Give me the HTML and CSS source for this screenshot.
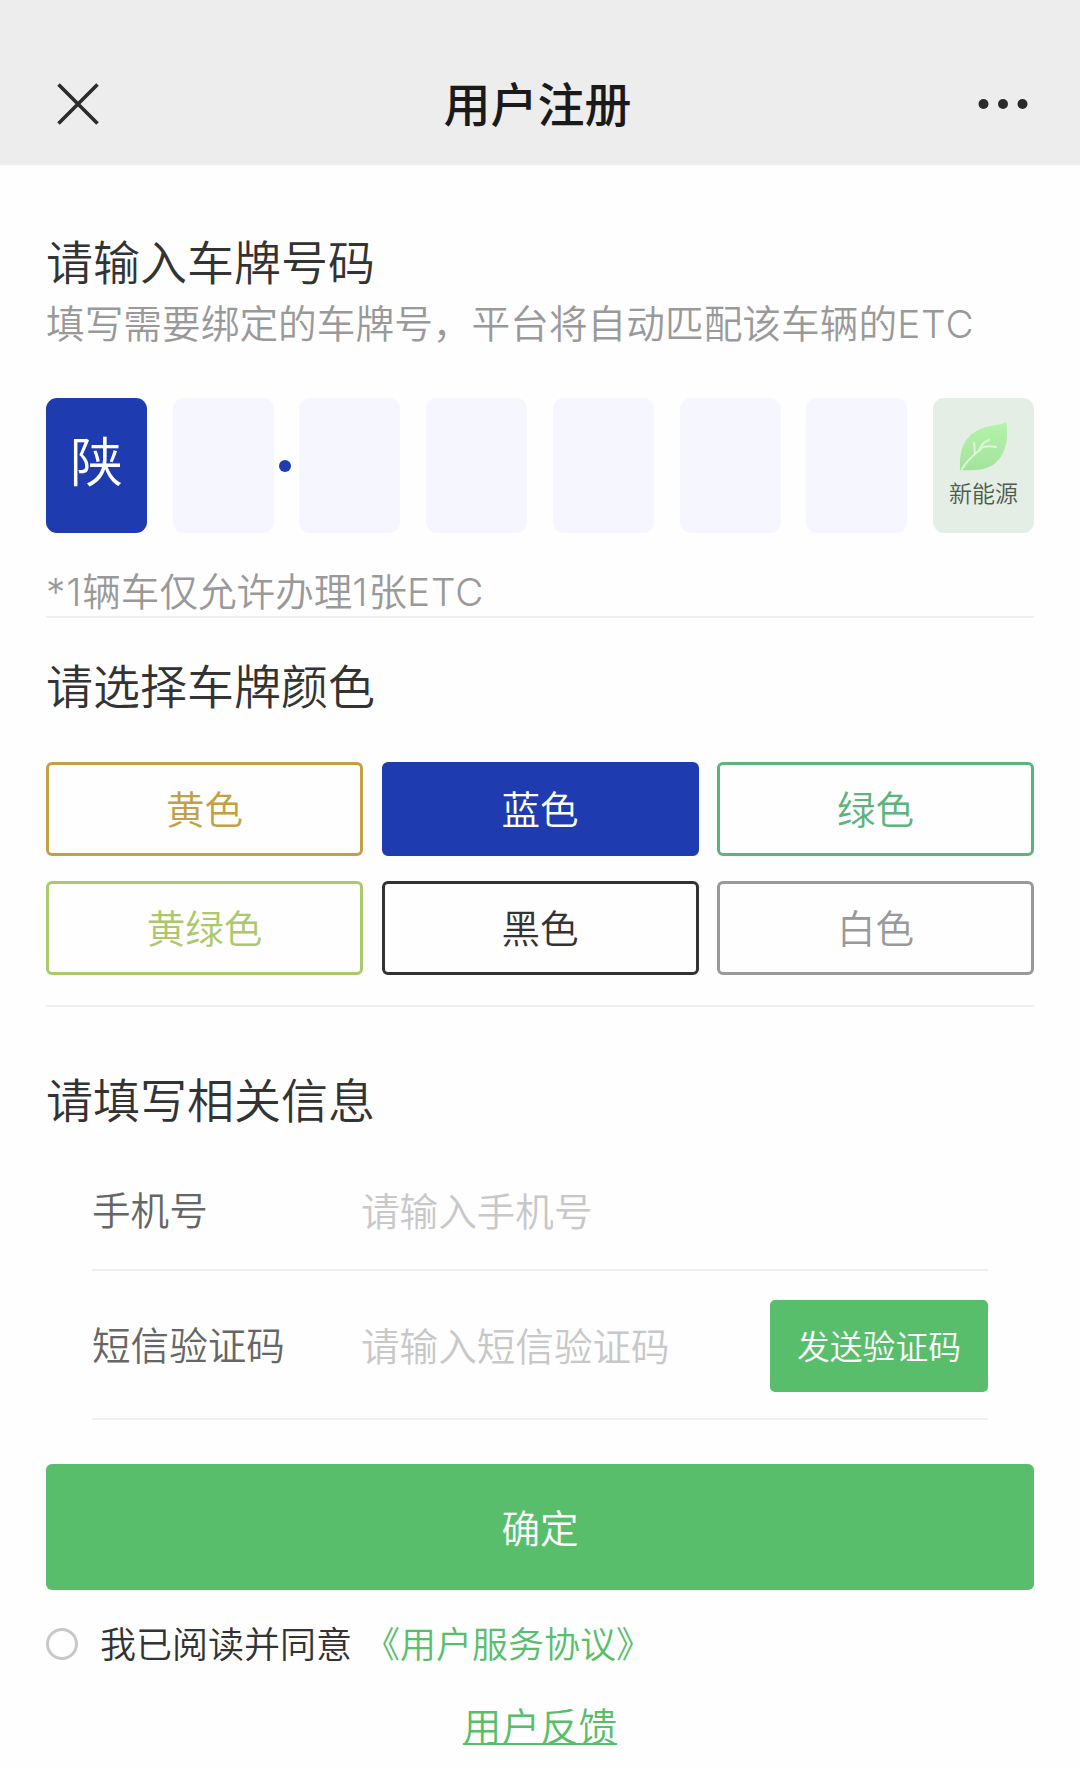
FILE: index.html
```html
<!DOCTYPE html>
<html lang="zh-CN">
<head>
  <meta charset="UTF-8">
  <title>用户注册</title>
  <link rel="stylesheet" href="styles.css">
</head>
<body>

<header class="navbar">
  <svg class="close" viewBox="0 0 42 42">
    <path d="M1.5 1.5 L40.5 40.5 M40.5 1.5 L1.5 40.5" stroke="#2b2b2b" stroke-width="3.6" fill="none"/>
  </svg>
  <h1>用户注册</h1>
  <svg class="more" viewBox="0 0 50 12">
    <circle cx="5.5" cy="6" r="5"/>
    <circle cx="25" cy="6" r="5"/>
    <circle cx="44.5" cy="6" r="5"/>
  </svg>
</header>

<main class="container">
  <section class="plate-section">
    <h2>请输入车牌号码</h2>
    <p class="tip">填写需要绑定的车牌号，平台将自动匹配该车辆的<span class="latin">ETC</span></p>
    <div class="plate">
      <div class="cell province">陕</div>
      <div class="cell city"></div>
      <div class="cell"></div>
      <div class="cell"></div>
      <div class="cell"></div>
      <div class="cell"></div>
      <div class="cell"></div>
      <div class="cell energy">
        <svg class="leaf" viewBox="0 0 48 50">
          <defs>
            <linearGradient id="leafFill" x1="0" y1="0" x2="0" y2="1">
              <stop offset="0" stop-color="#b5f2ab"/>
              <stop offset="1" stop-color="#a3e49c"/>
            </linearGradient>
          </defs>
          <path d="M47 1 C40 5 32 4 24 7 C8 13 0 24 1 49 C14 50 26 49 34 44 C44 37 51 22 47 1 Z" fill="url(#leafFill)"/>
          <path d="M3 48 C9 38 15 34 22 28 M16 32 C15 28 16 26 15 22 M20 29 C23 23 25 21 30 19 M22 27 C27 24 32 25 37 26" stroke="#e0f3dd" stroke-width="2" fill="none" stroke-linecap="round"/>
        </svg>
        <span>新能源</span>
      </div>
    </div>
    <p class="note"><span class="latin">*1</span>辆车仅允许办理<span class="latin">1</span>张<span class="latin">ETC</span></p>
  </section>

  <section class="color-section">
    <h2>请选择车牌颜色</h2>
    <div class="colors">
      <button class="color yellow">黄色</button>
      <button class="color blue">蓝色</button>
      <button class="color green">绿色</button>
      <button class="color lime">黄绿色</button>
      <button class="color black">黑色</button>
      <button class="color white">白色</button>
    </div>
  </section>

  <section class="info-section">
    <h2>请填写相关信息</h2>
    <div class="form">
      <div class="row">
        <label for="phone">手机号</label>
        <input id="phone" type="text" placeholder="请输入手机号">
      </div>
      <div class="row sms">
        <label for="code">短信验证码</label>
        <input id="code" type="text" placeholder="请输入短信验证码">
        <button class="send">发送验证码</button>
      </div>
    </div>
    <button class="submit">确定</button>
    <div class="agree">
      <span class="radio"></span>
      <span class="agree-text">我已阅读并同意</span>
      <a class="agreement">《用户服务协议》</a>
    </div>
    <div class="feedback"><a>用户反馈</a></div>
  </section>
</main>

</body>
</html>
```

FILE: styles.css
```css
* {
  box-sizing: border-box;
}

body {
  margin: 0;
  background: #fefefe;
  color: #333;
  font-family: Inter, "Noto Sans CJK SC", sans-serif;
  font-size: 38.6px;
  font-weight: 350;
}

h1, h2, p {
  margin: 0;
}

button, input {
  font: inherit;
  padding: 0;
}

.navbar {
  display: flex;
  justify-content: space-between;
  align-items: center;
  height: 165px;
  padding: 43px 52px 0 57px;
  background: #ededed;
}

.navbar h1 {
  padding: 2px 2px 0 0;
  font-size: 47px;
  font-weight: 500;
  line-height: 60px;
  color: #1a1a1a;
}

.close {
  width: 42px;
  height: 42px;
}

.more {
  width: 50px;
  height: 12px;
  fill: #2b2b2b;
}

.container {
  padding: 0 46px;
}

h2 {
  font-size: 47px;
  font-weight: 350;
  line-height: 60px;
}

.plate-section {
  height: 453px;
  padding-top: 68px;
  border-bottom: 2px solid #f0f0f0;
}

.tip, .note {
  color: #999;
  line-height: 50px;
  white-space: nowrap;
}

.tip {
  margin-top: 6px;
  font-size: 38.7px;
}

.latin {
  letter-spacing: 0.9px;
}

.plate {
  display: flex;
  justify-content: space-between;
  margin-top: 49px;
}

.cell {
  position: relative;
  width: 101px;
  height: 135px;
  border-radius: 11px;
  background: #f5f6ff;
}

.province {
  background: #1e3bb0;
  color: #fff;
  font-size: 53px;
  line-height: 131px;
  text-align: center;
}

/* separator dot between the city letter and the number */
.city::after {
  content: "";
  position: absolute;
  left: 106px;
  top: 62px;
  width: 12px;
  height: 12px;
  border-radius: 50%;
  background: #1e3bb0;
}

.energy {
  display: flex;
  flex-direction: column;
  align-items: center;
  padding-top: 23px;
  background: #e5eee4;
  color: #4d5a50;
  font-size: 23px;
  line-height: 30px;
}

.leaf {
  width: 48px;
  height: 50px;
  margin-bottom: 8px;
}

.note {
  margin-top: 34px;
}

.color-section {
  height: 389px;
  padding-top: 39px;
  border-bottom: 2px solid #f0f0f0;
}

.colors {
  display: grid;
  grid-template-columns: repeat(3, 1fr);
  gap: 25px 18.5px;
  margin-top: 45px;
}

.color {
  height: 94px;
  padding-bottom: 4px;
  border: 3px solid;
  border-radius: 6px;
  background: #fefefe;
}

.yellow {
  color: #c3a045;
}

.blue {
  border-color: #1e3bb0;
  background: #1e3bb0;
  color: #fff;
}

.green {
  color: #5cb37d;
}

.lime {
  color: #abc86b;
}

.black {
  color: #333;
}

.white {
  color: #999;
}

.info-section {
  padding-top: 64px;
}

.form {
  margin: 18px 46px 0;
}

.row {
  display: flex;
  align-items: center;
  height: 122px;
  border-bottom: 2px solid #f0f0f0;
}

.row label {
  width: 269px;
  padding-bottom: 3px;
  color: #666;
}

.row input {
  flex: 1;
  min-width: 0;
  height: 60px;
  padding-top: 5px;
  border: none;
  outline: none;
  background: none;
}

.row input::placeholder {
  color: #c8c8c8;
}

.sms {
  height: 149px;
}

.send {
  width: 218px;
  height: 92px;
  margin-top: 2px;
  padding-bottom: 2px;
  border: none;
  border-radius: 5px;
  background: #59be6c;
  color: #fff;
  font-size: 32.8px;
}

.submit {
  display: block;
  width: 100%;
  height: 126px;
  margin-top: 44px;
  padding-bottom: 3px;
  border: none;
  border-radius: 6px;
  background: #59be6c;
  color: #fff;
}

.agree {
  display: flex;
  align-items: center;
  height: 50px;
  margin-top: 29px;
  font-size: 36px;
}

.radio {
  width: 32px;
  height: 32px;
  margin-right: 22px;
  border: 3px solid #c8c8c8;
  border-radius: 50%;
}

.agree-text, .agreement {
  padding-bottom: 5px;
}

.agreement {
  margin-left: 12px;
  color: #59be6c;
}

.feedback {
  margin-top: 33px;
  line-height: 50px;
  text-align: center;
  color: #59be6c;
}

.feedback a {
  text-decoration: underline;
  text-decoration-thickness: 2px;
  text-underline-offset: 2px;
}
```
